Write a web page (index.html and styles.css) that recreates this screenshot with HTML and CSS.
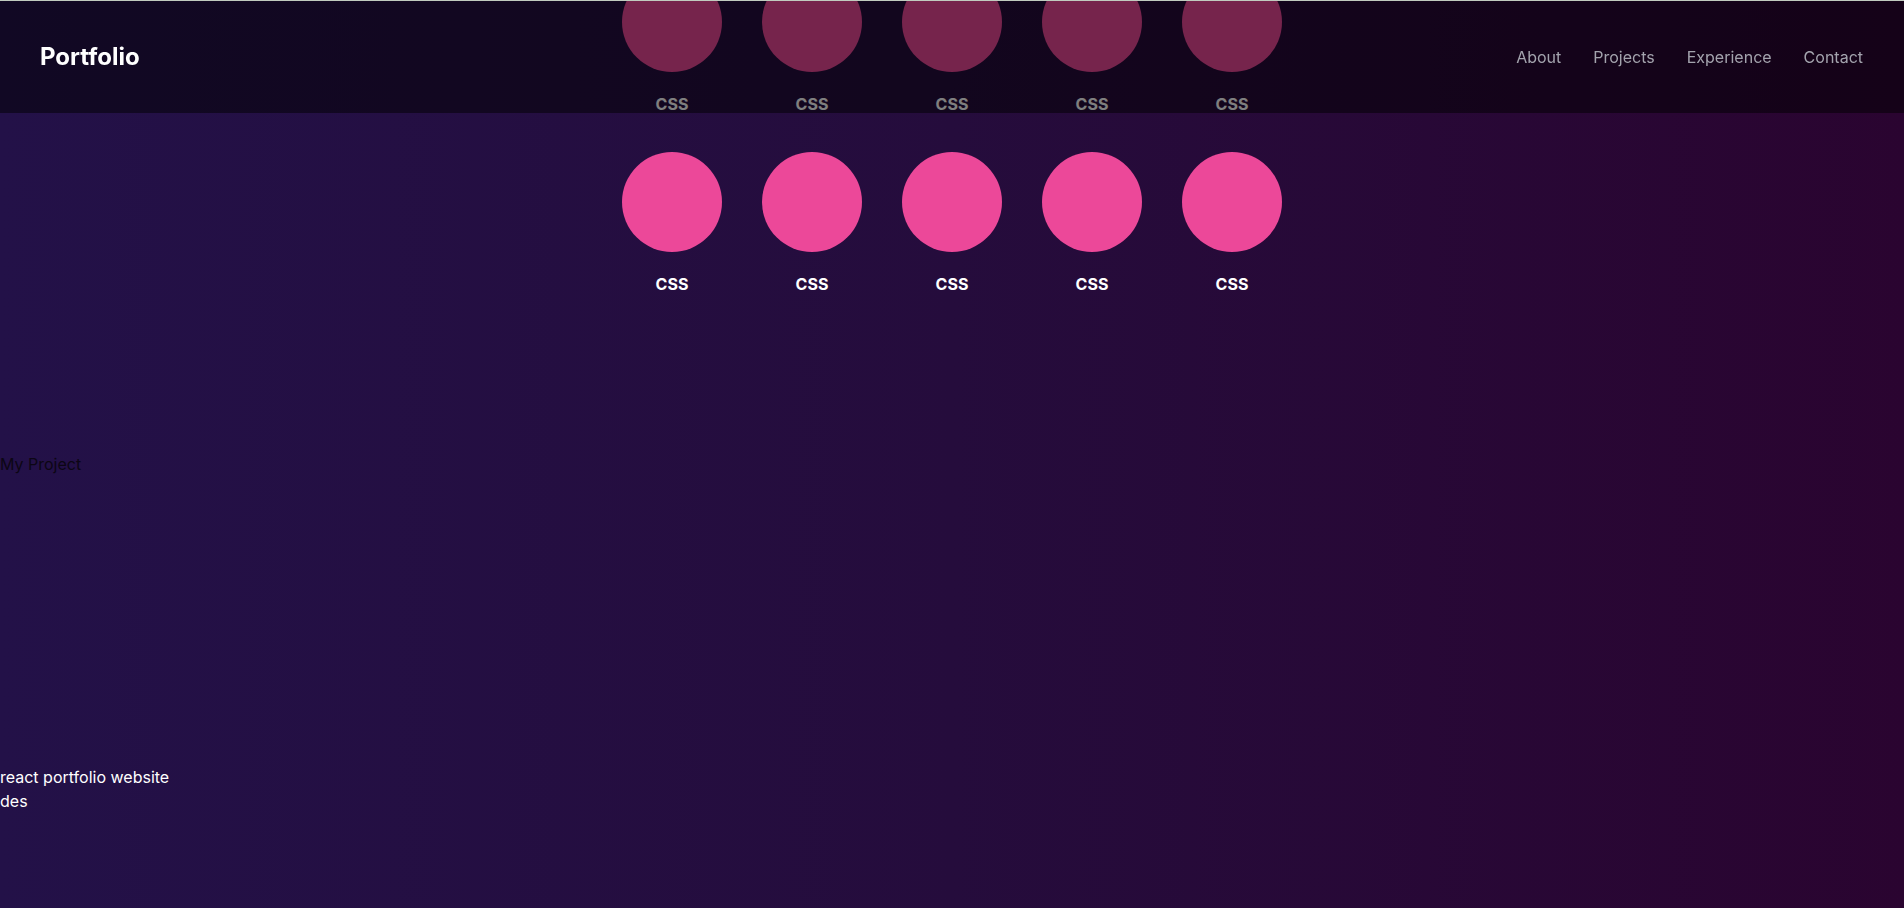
FILE: index.html
```html
<!DOCTYPE html>
<html lang="en">
<head>
<meta charset="utf-8">
<title>Portfolio</title>
<link rel="stylesheet" href="styles.css">
</head>
<body>
<header class="site-header">
  <div class="brand">Portfolio</div>
  <nav class="nav">
    <a href="#about">About</a>
    <a href="#projects">Projects</a>
    <a href="#experience">Experience</a>
    <a href="#contact">Contact</a>
  </nav>
</header>
<main class="content">
  <section class="skills">
    <div class="skill"><div class="dot"></div><span class="label">CSS</span></div>
    <div class="skill"><div class="dot"></div><span class="label">CSS</span></div>
    <div class="skill"><div class="dot"></div><span class="label">CSS</span></div>
    <div class="skill"><div class="dot"></div><span class="label">CSS</span></div>
    <div class="skill"><div class="dot"></div><span class="label">CSS</span></div>
    <div class="skill"><div class="dot"></div><span class="label">CSS</span></div>
    <div class="skill"><div class="dot"></div><span class="label">CSS</span></div>
    <div class="skill"><div class="dot"></div><span class="label">CSS</span></div>
    <div class="skill"><div class="dot"></div><span class="label">CSS</span></div>
    <div class="skill"><div class="dot"></div><span class="label">CSS</span></div>
  </section>
  <section class="projects">
    <h3 class="project-title">My Project</h3>
    <div class="project-image"></div>
    <p class="project-name">react portfolio website</p>
    <p class="project-desc">des</p>
  </section>
</main>
</body>
</html>
```
FILE: styles.css
```css
html, body {
  margin: 0;
  padding: 0;
}
body {
  min-height: 100vh;
  overflow: hidden;
  font-family: Inter, "Liberation Sans", sans-serif;
  font-size: 16px;
  line-height: 24px;
  color: #ffffff;
  background: linear-gradient(to right, #231148 0%, #250c3c 50%, #2a0430 100%);
}
.site-header {
  position: fixed;
  top: 0;
  left: 0;
  right: 0;
  height: 113px;
  z-index: 10;
  display: flex;
  align-items: center;
  justify-content: space-between;
  padding: 0 41px 0 40px;
  background: rgba(0, 0, 0, 0.5);
  box-shadow: inset 0 1px 0 #c1cbbf;
}
.brand {
  font-size: 24px;
  font-weight: 700;
  color: #ffffff;
  line-height: 32px;
  padding-top: 1px;
}
.nav {
  display: flex;
  gap: 32px;
  padding-top: 1px;
}
.nav a {
  color: #a3a3ad;
  text-decoration: none;
  font-size: 16px;
}
.content {
  margin-top: -28px;
}
.skills {
  display: grid;
  grid-template-columns: repeat(5, 100px);
  column-gap: 40px;
  row-gap: 38px;
  justify-content: center;
}
.skill {
  display: flex;
  flex-direction: column;
  align-items: center;
  gap: 22px;
}
.dot {
  width: 100px;
  height: 100px;
  border-radius: 50%;
  background: #ec4899;
}
.label {
  font-weight: 700;
  font-size: 16px;
  line-height: 20px;
  color: #ffffff;
}
.projects {
  margin-top: 158px;
}
.project-title {
  margin: 0;
  font-size: 16px;
  font-weight: 400;
  line-height: 24px;
  color: #0c0614;
}
.project-image {
  height: 289px;
}
.project-name,
.project-desc {
  margin: 0;
  line-height: 24px;
  color: #ffffff;
}
```
